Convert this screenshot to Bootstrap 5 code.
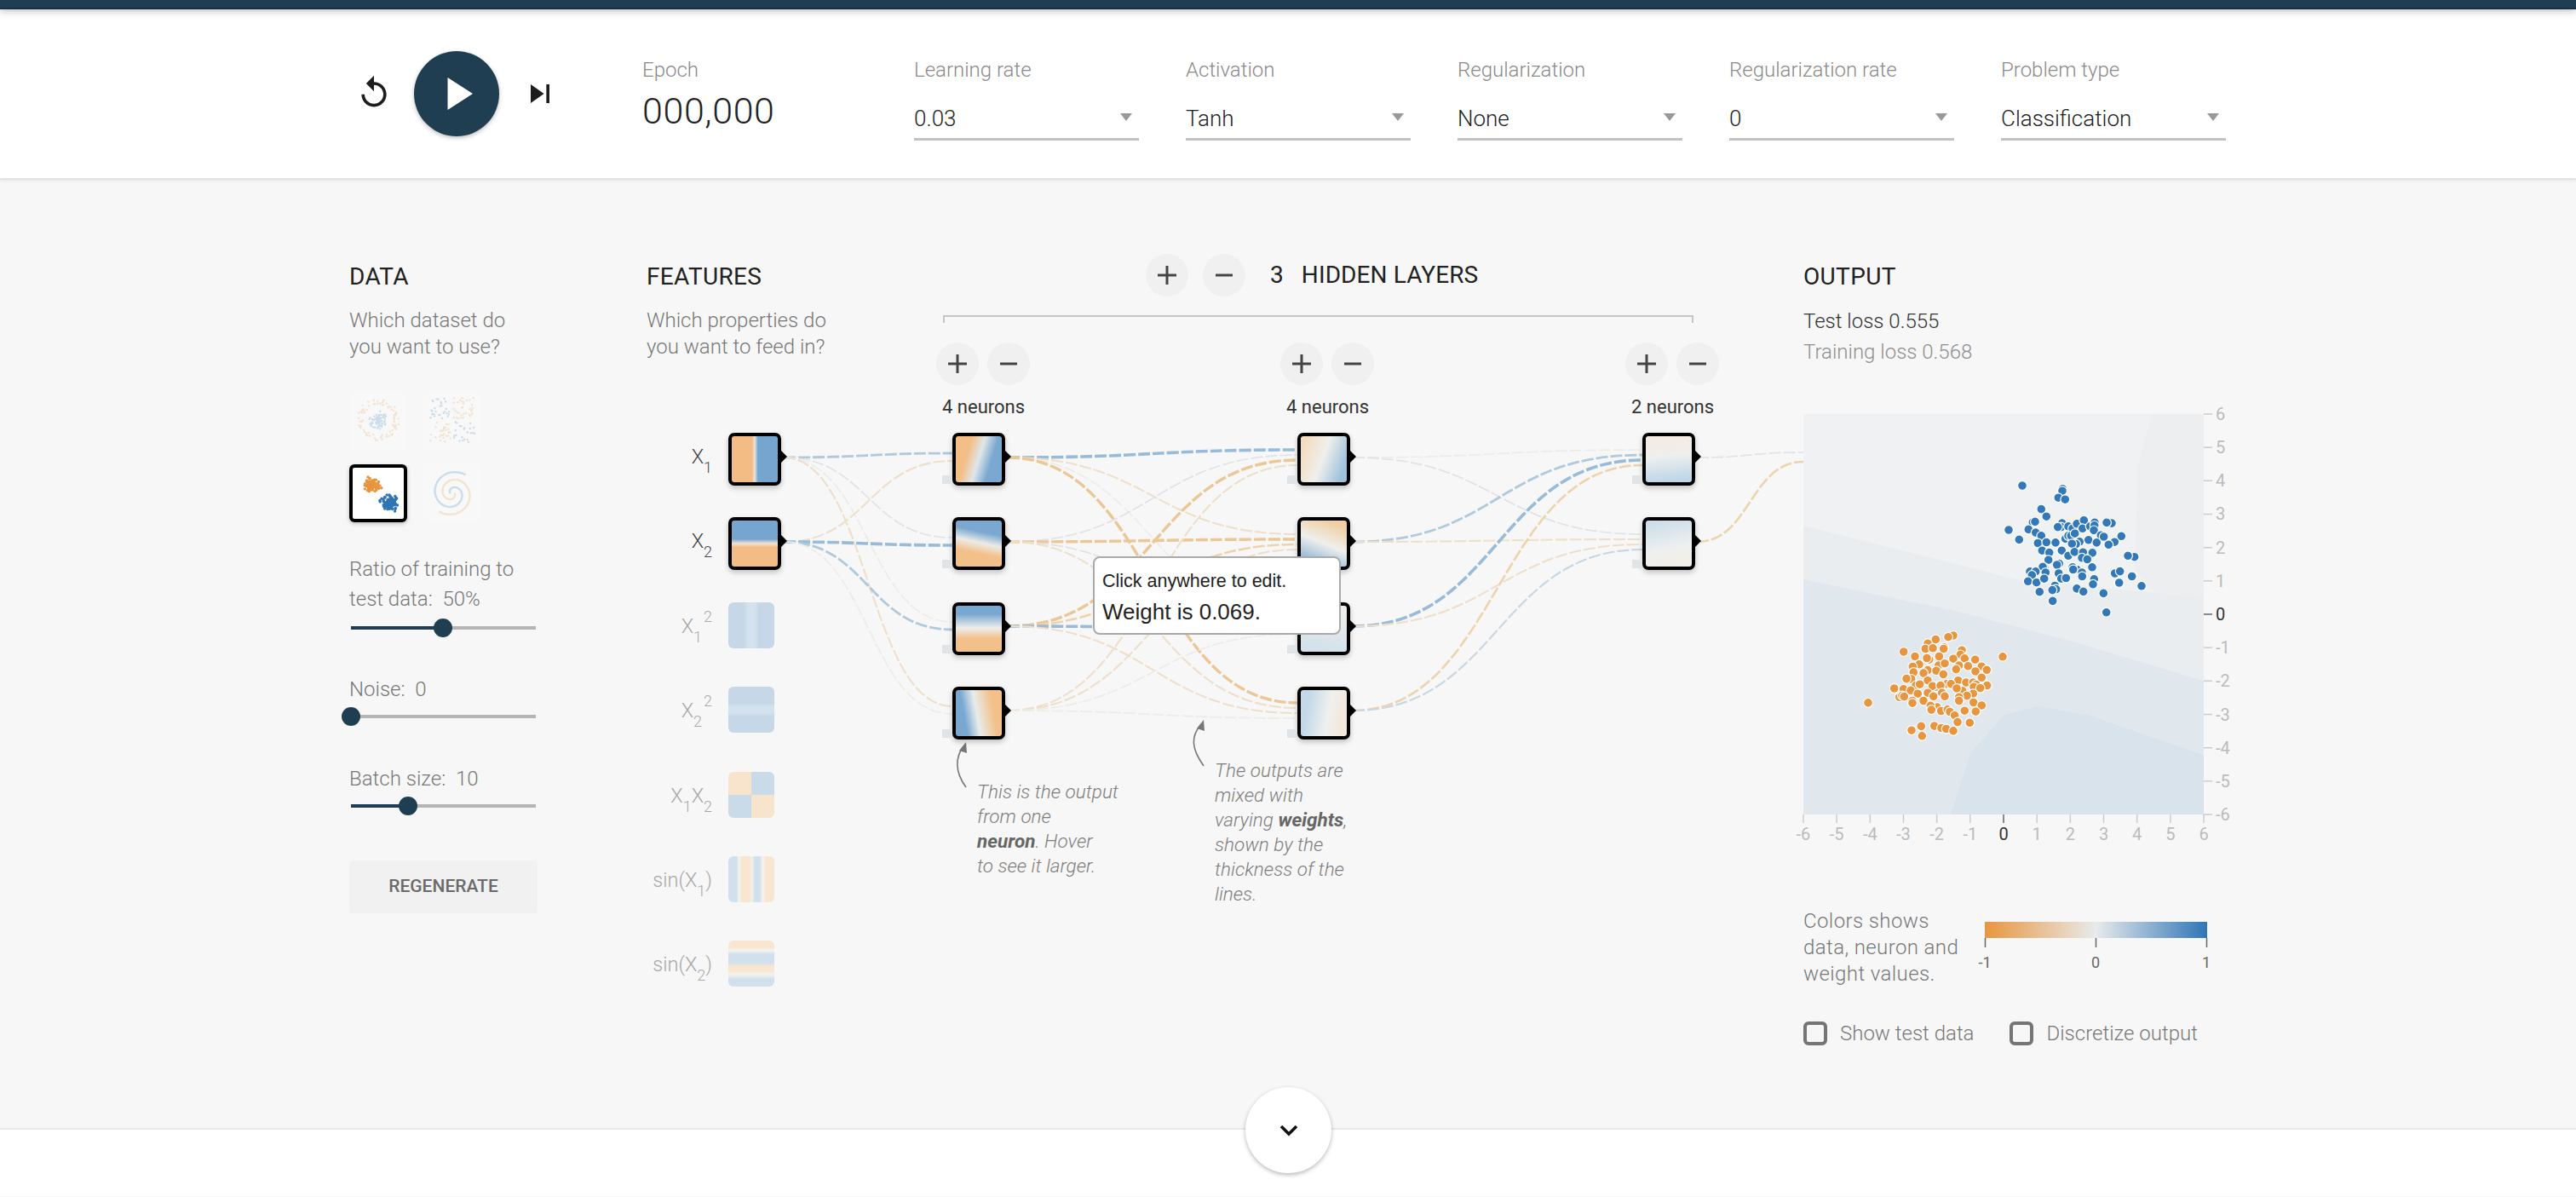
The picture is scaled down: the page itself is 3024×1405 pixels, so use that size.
<!DOCTYPE html>
<html lang="en">
<head>
<meta charset="utf-8">
<title>Neural Network Playground</title>
<link href="https://cdn.jsdelivr.net/npm/bootstrap@5.3.0/dist/css/bootstrap.min.css" rel="stylesheet">
<style>
html,body{height:1405px;overflow:hidden}
body{background:#f7f7f7;font-family:Roboto,"Liberation Sans",sans-serif;font-weight:300;color:#333;font-size:24px}
.top-strip{height:11px;background:#203e52;border-bottom:2px solid #16303f;box-shadow:0 3px 8px rgba(0,0,0,.22);position:relative;z-index:2}
.ctrl-bar{height:200px;border-bottom:2px solid #e3e3e3;box-shadow:0 1px 3px rgba(0,0,0,.08)}
.shell{width:2204px;margin:0 auto}
.play-group{width:344px;padding-top:49px;padding-left:7px}
.icon-btn{width:44px;height:44px;padding:0;border:0;background:none;line-height:0}
.icon-btn svg{width:44px;height:44px;fill:#1d1d1d}
.reset-btn{margin-right:25px;margin-top:-3px}
.step-btn{margin-left:26px}
.play-btn{width:100px;height:100px;padding:0;border:0;border-radius:50%;background:#203e52;box-shadow:0 2px 5px rgba(0,0,0,.25);line-height:0}
.ctrl-grid{grid-template-columns:repeat(6,264px);column-gap:55px;padding-top:56px}
.ctrl-label{font-size:24px;line-height:30px;color:#8a8a8a}
.epoch-val{font-size:43px;line-height:50px;margin-top:8px;color:#222;letter-spacing:.6px}
.pick{height:52px;margin-top:16px;padding:4px 0 0;border:0;border-bottom:3px solid #c2c2c2;border-radius:0;background-color:transparent;font-size:26px;font-weight:300;color:#222;font-family:Roboto,"Liberation Sans",sans-serif;background-size:14px 9px;background-position:right 8px center;background-image:url("data:image/svg+xml,%3Csvg xmlns='http://www.w3.org/2000/svg' viewBox='0 0 14 9'%3E%3Cpath d='M0 0h14L7 9z' fill='%23999'/%3E%3C/svg%3E")}
.work{height:1114px;padding-top:96px;position:relative}
.data-pane{width:349px}
.net-pane{width:1358px;position:relative;margin-top:-96px;height:1114px;padding-top:96px}
.out-pane{width:497px}
.sec-title{font-size:28px;line-height:36px;margin-bottom:18px;font-weight:400;color:#222;letter-spacing:.35px}
.out-pane .sec-title{margin-bottom:16px}
.sec-desc{font-size:24px;line-height:31px;color:#777;margin:0}
.thumb-grid{display:grid;grid-template-columns:68px 68px;gap:18px 19px;margin-top:36px}
.thumb{width:68px;height:68px;border:4px solid transparent;border-radius:6px;opacity:.2;background:#fff;line-height:0}
.thumb.picked{opacity:1;border-color:#000;box-shadow:0 2px 5px rgba(0,0,0,.22)}
.thumb svg{width:60px;height:60px}
.ctl-text{font-size:24px;line-height:35px;color:#777}
.m-ratio{margin-top:38px}.m-noise{margin-top:45px}.m-batch{margin-top:46px}
.slide{width:217px;height:21px;margin:5px 0 0 2px;position:relative}
.m-noise+.slide,.m-batch+.slide{margin-top:3px}
.slide::before{content:"";position:absolute;left:0;right:0;top:9px;height:4px;background:#b5b5b5}
.slide-fill{position:absolute;left:0;top:9px;height:4px;background:#203e52}
.slide-knob{position:absolute;top:0;width:22px;height:22px;margin-left:-11px;border-radius:50%;background:#203e52}
.regen{display:block;width:221px;height:62px;margin-top:54px;background:#f1f1f1;border:0;border-radius:4px;font-size:21px;font-weight:500;color:#6a6a6a;padding:0}
.link-map{position:absolute;left:0;top:0;width:1358px;height:1114px;z-index:0}
.feat-col{width:158px;margin-top:85px;position:relative;z-index:1}
.feat-row{height:99.4px;display:flex;justify-content:flex-end;align-items:flex-start}
.feat-name{font-size:23.5px;line-height:30px;margin-right:19px;margin-top:13px;color:#444;white-space:nowrap}
.feat-off .feat-name{color:#a8a8a8}
.feat-name sub,.feat-name sup{font-size:18px;position:relative;vertical-align:baseline}
.feat-name sub{bottom:-11px}
.feat-name sup{top:-13px;margin-left:2px}
.feat-off .feat-box{width:54px;height:54px;border-radius:6px;margin-right:8px}
.neuron{width:62px;height:62px;border:4px solid #000;border-radius:7px;box-shadow:0 3px 6px rgba(0,0,0,.22);position:relative}
.neuron::after{content:"";position:absolute;right:-11px;top:17px;border-left:7px solid #000;border-top:7px solid transparent;border-bottom:7px solid transparent}
.layer{position:absolute;top:191px;z-index:1}
.lay-a{left:340px}.lay-b{left:744px}.lay-c{left:1149px}
.btn-pair{column-gap:10px}
.round-btn{width:50px;height:50px;padding:0;border:0;border-radius:50%;background:#f0f0f0;line-height:0}
.round-btn svg{width:24px;height:24px;stroke:#444;stroke-width:3;fill:none}
.neuron-count{font-size:22px;line-height:30px;font-weight:400;margin:11px 0 15px 7px;color:#333;white-space:nowrap}
.layer .neuron{margin:0 0 37.4px 19px}
.lay-b .neuron,.lay-c .neuron{margin-left:20px}
.neuron.has-dot::before{content:"";position:absolute;left:-16px;top:46px;width:12px;height:10px;background:#e0e4e6}
.f-x1{background:linear-gradient(90deg,#f3bc84 44%,#e7e5df 50%,#76a6d0 57%)}
.f-x2{background:linear-gradient(180deg,#76a6d0 40%,#efe4d4 50%,#f3bc84 58%)}
.f-x1s{background:linear-gradient(90deg,#c6d8e7 34%,#d4e2ee 42%,#d4e2ee 58%,#c6d8e7 66%)}
.f-x2s{background:linear-gradient(180deg,#c6d8e7 36%,#d4e2ee 44%,#d4e2ee 56%,#c6d8e7 64%)}
.f-xx{background:conic-gradient(#c9dbe9 0 90deg,#f8e4cc 90deg 180deg,#c9dbe9 180deg 270deg,#f8e4cc 270deg)}
.f-s1{background:linear-gradient(90deg,#d0e0ec 18%,#f4f3f0 23%,#f8e6d0 30%,#f8e6d0 47%,#f0f1ef 52%,#d0e0ec 57%,#d0e0ec 68%,#f4f3f0 75%,#f8e6d0 82%)}
.f-s2{background:linear-gradient(180deg,#f8e6d0 14%,#f4f3f0 22%,#d0e0ec 30%,#d0e0ec 48%,#f8e6d0 56%,#f8e6d0 66%,#f4f3f0 74%,#d0e0ec 84%)}
.n-a1{background:linear-gradient(107deg,#f3bf87 28%,#dfe6ea 50%,#7aa8d0 72%)}
.n-a2{background:linear-gradient(192deg,#7aa8d0 28%,#ecebe7 48%,#f3c08a 68%)}
.n-a3{background:linear-gradient(180deg,#78a7d0 18%,#edeeec 48%,#f3c08a 72%)}
.n-a4{background:linear-gradient(80deg,#78a7d0 22%,#e8ecec 46%,#f3c08a 78%)}
.n-b1{background:linear-gradient(110deg,#f3dcc0 8%,#efefec 48%,#9fc1dc 88%)}
.n-b2{background:linear-gradient(22deg,#8fb6d8 14%,#efefec 50%,#f1cfa2 88%)}
.n-b3{background:linear-gradient(190deg,#eeeeec 10%,#d2e1eb 90%)}
.n-b4{background:linear-gradient(100deg,#c4d9e7 18%,#eff0ef 58%,#f2e8dc 88%)}
.n-c1{background:linear-gradient(174deg,#f2ece5 18%,#eef0ef 42%,#bfd6e7 92%)}
.n-c2{background:linear-gradient(168deg,#cfdfea 10%,#eef0ef 60%,#f2eee8 90%)}
.hl-head{position:absolute;left:586px;top:87px;gap:17px;z-index:1}
.hl-text{font-size:28px;line-height:50px;font-weight:400;color:#222;margin-left:12px;letter-spacing:.1px}
.hl-text span{margin-right:21px}
.bracket{position:absolute;left:348px;top:159px;width:881px;height:9px;border:2px solid #c6c6c6;border-bottom:0}
.note{position:absolute;font-size:22.5px;line-height:29px;font-style:italic;color:#7d7d7d;white-space:nowrap;z-index:1}
.note b{font-weight:700;color:#666}
.note-a{left:388px;top:704px}
.note-b{left:667px;top:679px}
.tip-box{position:absolute;left:524px;top:442px;width:291px;height:92px;background:#fff;border:2px solid #aaa;border-radius:8px;padding:11px 9px;font-family:"Liberation Sans",Arial,sans-serif;font-weight:400;color:#222;z-index:3}
.tip-box div:first-child{font-size:21.5px;line-height:33px}
.tip-box div:last-child{font-size:26px;line-height:38px}
.loss-a,.loss-b{font-size:24px;line-height:36px;margin:0}
.loss-a{color:#333}.loss-b{color:#8f8f8f}
.out-plot{width:470px;height:470px;margin-top:55px;position:relative}
.out-plot svg{position:absolute;left:0;top:0;overflow:visible}
.axis-t{font-size:20px;fill:#bbb;font-weight:400;font-family:Roboto,sans-serif}
.axis-z{fill:#333}
.legend-row{margin-top:107px}
.legend-text{width:203px;font-size:24px;line-height:31px;color:#777;letter-spacing:.4px;padding-top:3px}
.legend-scale{width:290px;height:90px;overflow:visible}
.legend-t{font-size:18px;fill:#666;font-weight:400;font-family:Roboto,sans-serif}
.check-row{margin-top:40px}
.box-check{width:28px;height:28px;margin:0;border:4px solid #757575;border-radius:4px;background-color:transparent;float:none}
.check-label{font-size:24px;line-height:28px;color:#777;margin-left:15px}
.form-check-input.check-two{margin-left:42px}
.page-end{height:80px;background:#fff;position:relative;border-top:2px solid #e9e9e9;margin-top:-1px}
.more-btn{position:absolute;left:1462px;top:-50px;width:101px;height:101px;padding:0;border:0;border-radius:50%;background:#fff;box-shadow:0 2px 5px rgba(0,0,0,.28);line-height:0}
.more-btn svg{width:28px;height:20px;fill:none;stroke:#111;stroke-width:3.6}
.lk{fill:none;stroke-dasharray:14 3}
</style>
</head>
<body>
<div class="top-strip"></div>
<header class="ctrl-bar bg-white">
  <div class="shell d-flex align-items-start">
    <div class="play-group d-flex align-items-center">
      <button class="icon-btn reset-btn" type="button" aria-label="Reset"><svg viewBox="0 0 24 24"><path d="M12 5V1L7 6l5 5V7c3.31 0 6 2.69 6 6s-2.69 6-6 6-6-2.69-6-6H4c0 4.42 3.58 8 8 8s8-3.58 8-8-3.58-8-8-8z"/></svg></button>
      <button class="play-btn" type="button" aria-label="Run"><svg width="100" height="100" viewBox="0 0 100 100"><path d="M39.5 31v38L69 50z" fill="#fff"/></svg></button>
      <button class="icon-btn step-btn" type="button" aria-label="Step"><svg viewBox="0 0 24 24"><path d="M6 18l8.5-6L6 6v12zM16 6v12h2V6h-2z"/></svg></button>
    </div>
    <div class="ctrl-grid d-grid">
      <div><div class="ctrl-label">Epoch</div><div class="epoch-val">000,000</div></div>
      <div><div class="ctrl-label">Learning rate</div><select class="form-select pick" aria-label="Learning rate"><option>0.03</option><option>0.1</option><option>0.3</option></select></div>
      <div><div class="ctrl-label">Activation</div><select class="form-select pick" aria-label="Activation"><option>Tanh</option><option>ReLU</option><option>Sigmoid</option><option>Linear</option></select></div>
      <div><div class="ctrl-label">Regularization</div><select class="form-select pick" aria-label="Regularization"><option>None</option><option>L1</option><option>L2</option></select></div>
      <div><div class="ctrl-label">Regularization rate</div><select class="form-select pick" aria-label="Regularization rate"><option>0</option><option>0.001</option><option>0.01</option></select></div>
      <div><div class="ctrl-label">Problem type</div><select class="form-select pick" aria-label="Problem type"><option>Classification</option><option>Regression</option></select></div>
    </div>
  </div>
</header>

<main class="work">
  <div class="shell d-flex align-items-start">
    <section class="data-pane">
      <h4 class="sec-title">DATA</h4>
      <p class="sec-desc">Which dataset do<br>you want to use?</p>
      <div class="thumb-grid">
        <div class="thumb"><svg id="th-circle" viewBox="0 0 60 60"></svg></div>
        <div class="thumb"><svg id="th-xor" viewBox="0 0 60 60"></svg></div>
        <div class="thumb picked"><svg id="th-gauss" viewBox="0 0 60 60"></svg></div>
        <div class="thumb"><svg id="th-spiral" viewBox="0 0 60 60"></svg></div>
      </div>
      <div class="ctl-text m-ratio">Ratio of training to<br>test data:&nbsp; 50%</div>
      <div class="slide"><div class="slide-fill" style="width:108px"></div><div class="slide-knob" style="left:108px"></div></div>
      <div class="ctl-text m-noise">Noise:&nbsp; 0</div>
      <div class="slide"><div class="slide-knob" style="left:0"></div></div>
      <div class="ctl-text m-batch">Batch size:&nbsp; 10</div>
      <div class="slide"><div class="slide-fill" style="width:67px"></div><div class="slide-knob" style="left:67px"></div></div>
      <button class="regen text-uppercase" type="button">Regenerate</button>
    </section>

    <section class="net-pane">
      <svg class="link-map" id="links" viewBox="759 211 1358 1114">
        <g fill="none" stroke="#777" stroke-width="1.6">
          <path d="M1134 924C1120 905 1122 888 1131 876"/>
          <path d="M1413 899C1398 878 1398 864 1410 850"/>
        </g>
        <path d="M1134 871l-8 10 9 3z" fill="#777"/>
        <path d="M1413 845l-8 10 9 3z" fill="#777"/>
      </svg>
      <h4 class="sec-title">FEATURES</h4>
      <p class="sec-desc">Which properties do<br>you want to feed in?</p>
      <div class="feat-col">
        <div class="feat-row"><span class="feat-name">X<sub>1</sub></span><div class="neuron f-x1"></div></div>
        <div class="feat-row"><span class="feat-name">X<sub>2</sub></span><div class="neuron f-x2"></div></div>
        <div class="feat-row feat-off"><span class="feat-name">X<sub>1</sub><sup>2</sup></span><div class="feat-box f-x1s"></div></div>
        <div class="feat-row feat-off"><span class="feat-name">X<sub>2</sub><sup>2</sup></span><div class="feat-box f-x2s"></div></div>
        <div class="feat-row feat-off"><span class="feat-name">X<sub>1</sub>X<sub>2</sub></span><div class="feat-box f-xx"></div></div>
        <div class="feat-row feat-off"><span class="feat-name">sin(X<sub>1</sub>)</span><div class="feat-box f-s1"></div></div>
        <div class="feat-row feat-off"><span class="feat-name">sin(X<sub>2</sub>)</span><div class="feat-box f-s2"></div></div>
      </div>

      <div class="hl-head d-flex align-items-center">
        <button class="round-btn" type="button" aria-label="Add layer"><svg viewBox="0 0 24 24"><path d="M12 1v22M1 12h22"/></svg></button>
        <button class="round-btn" type="button" aria-label="Remove layer"><svg viewBox="0 0 24 24"><path d="M2 12h20"/></svg></button>
        <div class="hl-text"><span>3</span>HIDDEN LAYERS</div>
      </div>
      <div class="bracket"></div>

      <div class="layer lay-a">
        <div class="d-flex btn-pair"><button class="round-btn" type="button" aria-label="Add neuron"><svg viewBox="0 0 24 24"><path d="M12 1v22M1 12h22"/></svg></button><button class="round-btn" type="button" aria-label="Remove neuron"><svg viewBox="0 0 24 24"><path d="M2 12h20"/></svg></button></div>
        <div class="neuron-count">4 neurons</div>
        <div class="neuron has-dot n-a1"></div><div class="neuron has-dot n-a2"></div><div class="neuron has-dot n-a3"></div><div class="neuron has-dot n-a4"></div>
      </div>
      <div class="layer lay-b">
        <div class="d-flex btn-pair"><button class="round-btn" type="button" aria-label="Add neuron"><svg viewBox="0 0 24 24"><path d="M12 1v22M1 12h22"/></svg></button><button class="round-btn" type="button" aria-label="Remove neuron"><svg viewBox="0 0 24 24"><path d="M2 12h20"/></svg></button></div>
        <div class="neuron-count">4 neurons</div>
        <div class="neuron has-dot n-b1"></div><div class="neuron has-dot n-b2"></div><div class="neuron has-dot n-b3"></div><div class="neuron has-dot n-b4"></div>
      </div>
      <div class="layer lay-c">
        <div class="d-flex btn-pair"><button class="round-btn" type="button" aria-label="Add neuron"><svg viewBox="0 0 24 24"><path d="M12 1v22M1 12h22"/></svg></button><button class="round-btn" type="button" aria-label="Remove neuron"><svg viewBox="0 0 24 24"><path d="M2 12h20"/></svg></button></div>
        <div class="neuron-count">2 neurons</div>
        <div class="neuron has-dot n-c1"></div><div class="neuron has-dot n-c2"></div>
      </div>

      <div class="note note-a">This is the output<br>from one<br><b>neuron</b>. Hover<br>to see it larger.</div>
      <div class="note note-b">The outputs are<br>mixed with<br>varying <b>weights</b>,<br>shown by the<br>thickness of the<br>lines.</div>
      <div class="tip-box"><div>Click anywhere to edit.</div><div>Weight is 0.069.</div></div>
    </section>

    <section class="out-pane">
      <h4 class="sec-title">OUTPUT</h4>
      <p class="loss-a">Test loss 0.555</p>
      <p class="loss-b">Training loss 0.568</p>
      <div class="out-plot"><svg id="plot" width="470" height="470" viewBox="0 0 470 470"></svg></div>
      <div class="legend-row d-flex align-items-start">
        <div class="legend-text">Colors shows<br>data, neuron and<br>weight values.</div>
        <svg class="legend-scale" viewBox="0 0 290 90">
          <defs><linearGradient id="lg"><stop offset="0" stop-color="#e8963f"/><stop offset=".5" stop-color="#e8eaeb"/><stop offset="1" stop-color="#2e75b6"/></linearGradient></defs>
          <rect x="10" y="19" width="261" height="19" fill="url(#lg)"/>
          <path d="M10.5 38v11M140.5 38v11M270.5 38v11" stroke="#666" stroke-width="1.5"/>
          <text class="legend-t" x="10" y="73" text-anchor="middle">-1</text>
          <text class="legend-t" x="140" y="73" text-anchor="middle">0</text>
          <text class="legend-t" x="270" y="73" text-anchor="middle">1</text>
        </svg>
      </div>
      <div class="check-row d-flex align-items-center">
        <input class="form-check-input box-check" type="checkbox" id="c1" aria-label="Show test data"><label class="check-label" for="c1">Show test data</label>
        <input class="form-check-input box-check check-two" type="checkbox" id="c2" aria-label="Discretize output"><label class="check-label" for="c2">Discretize output</label>
      </div>
    </section>
  </div>
</main>
<footer class="page-end"><button class="more-btn" type="button" aria-label="More"><svg viewBox="0 0 28 20"><path d="M5 5l9 9 9-9"/></svg></button></footer>

<script>
const NS='http://www.w3.org/2000/svg';
function add(p,t,a){const e=document.createElementNS(NS,t);for(const k in a)e.setAttribute(k,a[k]);p.appendChild(e);return e}
const ST={b3:['#98bbda',3.6],b2:['#afc9dd',2.8],b1:['#c8d7e2',2.2],g:['#dfe3e6',1.7],o3:['#ebc796',3.4],o2:['#edd3ae',2.6],o1:['#eedfca',2.1],c:['#eeece7',1.7]};
const links=document.getElementById('links');
const first=links.firstChild;
function lk(x0,y0,x1,y1,s){const m=(x0+x1)/2;const p=add(links,'path',{d:`M${x0} ${y0}C${m} ${y0} ${m} ${y1} ${x1} ${y1}`,class:'lk',stroke:ST[s][0],'stroke-width':ST[s][1]});links.insertBefore(p,first)}
const A=[537,636,735,834],C=[537,636],O2=[-5,4],O4=[-9,-3,3,9];
[['b2','g','c','o1'],['o1','b3','b2','c']].forEach((r,i)=>r.forEach((s,j)=>lk(920,[537,636][i],1118,A[j]+O2[i],s)));
[['b3','o1','c','o3'],['g','o3','g','o1'],['o3','o2','b3','o1'],['o1','o1','c','c']].forEach((r,i)=>r.forEach((s,j)=>lk(1183,A[i],1523,A[j]+O4[i],s)));
[['c','g'],['b2','o1'],['b3','o1'],['o2','b1']].forEach((r,i)=>r.forEach((s,j)=>lk(1588,A[i],1928,C[j]+O4[i],s)));
lk(1992,537,2117,531,'g');lk(1992,636,2117,542,'o2');

const plot=document.getElementById('plot');
add(plot,'rect',{width:470,height:470,fill:'#f0f1f2'});
add(plot,'polygon',{points:'409,0 470,0 470,215 416,215 389,181 393,60',fill:'#ecEEf0'});
add(plot,'polygon',{points:'0,131 116,160 249,194 393,208 470,215 470,470 0,470',fill:'#eaedf0'});
add(plot,'polygon',{points:'0,194 183,232 316,267 470,313 470,470 0,470',fill:'#e1e8ed'});
add(plot,'polygon',{points:'173,470 196,398 236,353 276,343 333,353 470,400 470,470',fill:'#d8e3eb'});
for(let v=-6;v<=6;v++){const p=235+v*39.17,z=v===0;
 add(plot,'line',{x1:470,x2:480,y1:235-v*39.17,y2:235-v*39.17,stroke:z?'#666':'#ccc','stroke-width':1.5});
 add(plot,'line',{x1:p,x2:p,y1:470,y2:480,stroke:z?'#666':'#ccc','stroke-width':1.5});
 let t=add(plot,'text',{x:p,y:500,'text-anchor':'middle',class:'axis-t'+(z?' axis-z':'')});t.textContent=v;
 t=add(plot,'text',{x:484,y:235-v*39.17+7,class:'axis-t'+(z?' axis-z':'')});t.textContent=v;
}
const blue="823,319,965,330,964,337,950,360,974,366,890,399,908,424,860,444,868,442,963,447,775,470,845,468,870,479,890,490,812,503,878,515,908,512,940,513,960,460,948,460,985,458,1000,465,1015,449,1040,437,1035,465,1062,458,1078,445,1077,455,1075,471,1138,447,1120,445,1100,488,1110,493,1172,491,975,500,985,490,995,490,1008,482,1025,510,1056,504,1085,513,1148,511,1127,520,1012,518,998,517,893,540,918,547,962,540,985,558,1007,545,1037,546,1070,548,1033,565,1052,570,915,572,1218,562,1195,558,953,585,945,589,900,598,895,596,1015,605,1000,597,1002,605,1069,597,850,612,870,612,857,624,905,615,951,618,1033,615,1034,628,1149,618,1167,611,1209,628,843,645,873,649,900,636,960,636,977,634,1076,638,1072,655,1164,650,1243,661,884,681,938,660,942,672,929,675,1015,670,1038,680,1109,686,930,712,1119,751".split(',').map(Number);
const orange="580,830,562,835,518,843,490,857,482,875,508,873,548,870,546,875,610,880,605,895,405,885,445,901,495,912,487,907,530,901,580,909,620,908,657,912,754,902,460,928,437,936,528,932,550,925,600,932,632,934,680,935,698,947,440,955,490,948,520,950,590,945,658,952,475,958,545,962,432,978,415,977,680,973,490,983,597,983,625,990,650,990,660,997,448,1000,462,996,518,1005,507,1002,557,995,535,1000,572,995,699,1000,372,1010,405,1012,430,1017,612,1018,592,1010,652,1005,675,1009,490,1025,540,1025,455,1028,650,1028,628,1035,390,1040,400,1035,407,1038,510,1037,550,1037,600,1040,475,1052,436,1052,436,1060,600,1052,651,1058,280,1059,680,1068,523,1074,500,1069,503,1083,537,1087,560,1082,568,1090,620,1086,659,1089,585,1102,595,1125,638,1127,467,1139,433,1153,513,1138,538,1145,555,1148,580,1155,470,1172".split(',').map(Number);
function dots(a,c){for(let i=0;i<a.length;i+=2)add(plot,'circle',{cx:(a[i]/3-17.33).toFixed(1),cy:(a[i+1]/2.904-25.8).toFixed(1),r:5.4,fill:c,stroke:'#fff','stroke-width':1.2})}
dots(blue,'#3379b9');dots(orange,'#e8953f');

let seed=12345;function R(){seed|=0;seed=seed+0x6D2B79F5|0;let t=Math.imul(seed^seed>>>15,1|seed);t=t+Math.imul(t^t>>>7,61|t)^t;return((t^t>>>14)>>>0)/4294967296}
function gs(){return (R()+R()+R()-1.5)/1.5}
const BL='#2e75b6',OR='#e8953f';
let s=document.getElementById('th-gauss');
for(let i=0;i<90;i++){add(s,'circle',{cx:22+gs()*13,cy:20+gs()*11,r:1.7,fill:OR});add(s,'circle',{cx:43+gs()*14,cy:41+gs()*13,r:1.7,fill:BL})}
s=document.getElementById('th-circle');
for(let i=0;i<80;i++){let a=R()*6.283,r=R()*11;add(s,'circle',{cx:30+r*Math.cos(a),cy:30+r*Math.sin(a),r:1.2,fill:BL});a=R()*6.283;r=18+R()*7;add(s,'circle',{cx:30+r*Math.cos(a),cy:30+r*Math.sin(a),r:1.2,fill:OR})}
s=document.getElementById('th-xor');
for(let i=0;i<130;i++){let x=4+R()*52,y=4+R()*52;if(Math.abs(x-30)<1.5||Math.abs(y-30)<1.5)continue;add(s,'circle',{cx:x,cy:y,r:1.2,fill:(x<30)===(y<30)?BL:OR})}
s=document.getElementById('th-spiral');
[[0,OR],[Math.PI,BL]].forEach(([o,c])=>{let d='';for(let i=0;i<=60;i++){const t=i/60*2.7*Math.PI,r=2+t*2.9,a=t+o;d+=(i?'L':'M')+(30+r*Math.cos(a)).toFixed(1)+' '+(30+r*Math.sin(a)).toFixed(1)}add(s,'path',{d:d,fill:'none',stroke:c,'stroke-width':2.4})});
</script>
<script src="https://cdn.jsdelivr.net/npm/bootstrap@5.3.0/dist/js/bootstrap.bundle.min.js"></script>
</body>
</html>
